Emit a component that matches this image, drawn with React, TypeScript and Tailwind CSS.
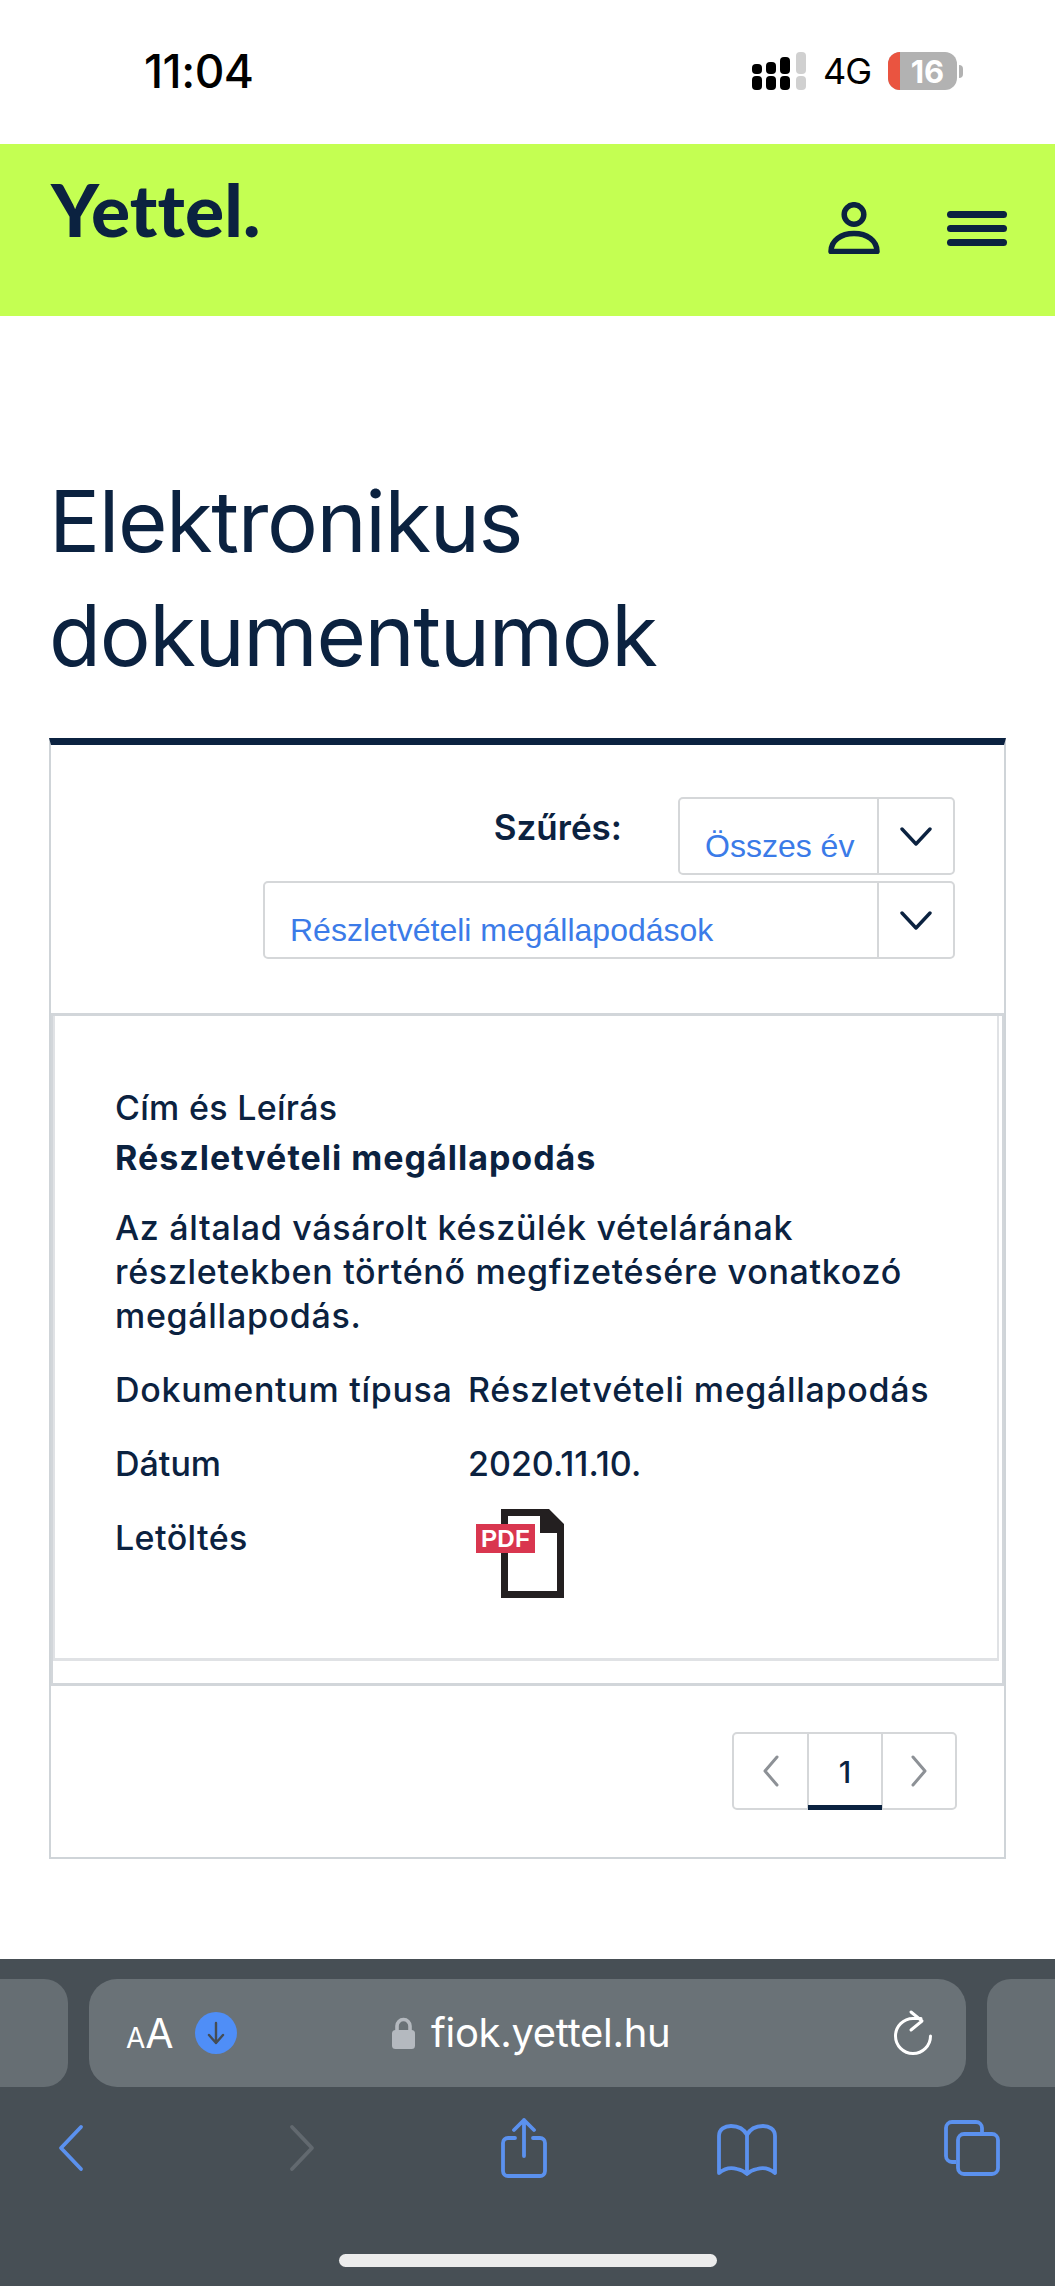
const navy = "#0b2240";

function Select({ label, width }: { label: string; width: string }) {
  return (
    <div className={`flex h-[78px] ${width} rounded-[5px] border-2 border-[#d5d7d9] bg-white`}>
      <div className="flex flex-1 items-end pb-[7px] pl-[25px] font-['Liberation_Sans',sans-serif] text-[32px] leading-[40px] text-[#3b7be8]">
        {label}
      </div>
      <div className="flex w-[76px] items-center justify-center border-l-2 border-[#d5d7d9] pt-[2px]">
        <svg width="32" height="20" viewBox="0 0 32 20" fill="none" stroke={navy} strokeWidth="3.4" strokeLinecap="round" strokeLinejoin="round">
          <path d="M2 2l14 15L30 2" />
        </svg>
      </div>
    </div>
  );
}

function Row({ label, children, className }: { label: string; children: React.ReactNode; className: string }) {
  return (
    <div className={`flex ${className}`}>
      <div className="w-[353px] shrink-0">{label}</div>
      <div>{children}</div>
    </div>
  );
}

function StatusBar() {
  return (
    <div className="flex h-[144px] shrink-0 items-start justify-between bg-white pl-[144px] pr-[92px] pt-[44px]">
      <div className="font-['Inter',sans-serif] text-[46px] font-medium leading-[54px] tracking-[-0.5px] text-black">11:04</div>
      <div className="flex items-center gap-[17px] pt-[8px]">
        <svg width="54" height="38" viewBox="0 0 54 38" fill="#000">
          <rect x="0" y="24" width="10" height="14" rx="4" />
          <rect x="0" y="12" width="10" height="10" rx="4" />
          <rect x="14" y="24" width="10" height="14" rx="4" />
          <rect x="14" y="10" width="10" height="12" rx="4" />
          <rect x="28" y="24" width="10" height="14" rx="4" />
          <rect x="28" y="5" width="10" height="17" rx="4" />
          <rect x="44" y="24" width="10" height="14" rx="4" fill="#d0d0d0" />
          <rect x="44" y="0" width="10" height="22" rx="4" fill="#d0d0d0" />
        </svg>
        <div className="font-['Inter',sans-serif] text-[36px] font-normal leading-[38px] tracking-[-1px] text-black">4G</div>
        <div className="flex items-center gap-[2px]">
          <div className="relative flex h-[38px] w-[69px] items-center justify-center overflow-hidden rounded-[12px] bg-[#b2b2b2] pl-[10px] font-['Inter',sans-serif] text-[31px] font-bold leading-none text-white">
            <div className="absolute inset-y-0 left-0 w-[12px] bg-[#ea5440]" />
            16
          </div>
          <div className="h-[13px] w-[4px] rounded-r-full bg-[#b2b2b2]" />
        </div>
      </div>
    </div>
  );
}

function Header() {
  return (
    <header className="flex h-[172px] shrink-0 items-start justify-between bg-[#c4ff52] pl-[51px] pr-[48px]">
      <div className="pt-[21px] font-['Lato',sans-serif] text-[73px] font-black leading-[88px] tracking-[0.2px] text-[#0b2240]">Yettel.</div>
      <div className="flex items-start gap-[67px] pt-[58px]">
        <svg width="52" height="52" viewBox="0 0 52 52" fill="none" stroke={navy} strokeWidth="5.500">
          <circle cx="26" cy="12.500" r="9.800" />
          <path d="M3 49.500c0-11 10-18 23-18s23 7 23 18z" strokeLinejoin="round" />
        </svg>
        <div className="mt-[9px] flex w-[60px] flex-col gap-[7px]">
          <div className="h-[7px] rounded-full bg-[#0b2240]" />
          <div className="h-[7px] rounded-full bg-[#0b2240]" />
          <div className="h-[7px] rounded-full bg-[#0b2240]" />
        </div>
      </div>
    </header>
  );
}

function Pagination() {
  return (
    <div className="flex h-[78px] w-[225px] rounded-[5px] border-2 border-[#d5d7d9] bg-white">
      <div className="flex w-[73px] items-center justify-center">
        <svg width="18" height="32" viewBox="0 0 18 32" fill="none" stroke="#8d9196" strokeWidth="3" strokeLinecap="round" strokeLinejoin="round">
          <path d="M15 2L3 16l12 14" />
        </svg>
      </div>
      <div className="relative flex w-[76px] items-center justify-center border-x-2 border-[#d5d7d9] pt-[3px] text-[30px] font-medium text-[#0b2240]">
        1
        <div className="absolute inset-x-[-1px] bottom-[-2px] h-[5px] bg-[#0b2240]" />
      </div>
      <div className="flex flex-1 items-center justify-center">
        <svg width="18" height="32" viewBox="0 0 18 32" fill="none" stroke="#8d9196" strokeWidth="3" strokeLinecap="round" strokeLinejoin="round">
          <path d="M3 2l12 14L3 30" />
        </svg>
      </div>
    </div>
  );
}

function PdfIcon() {
  return (
    <div className="relative -mt-[7px] ml-[8px] h-[90px] w-[90px]">
      <svg className="absolute left-[25px] top-0" width="63" height="89" viewBox="0 0 63 89">
        <path fillRule="evenodd" fill="#231f20" d="M0 0h48l15 15v74H0zM7 7v75h49V24H39V7z" />
      </svg>
      <div className="absolute left-0 top-[15px] flex h-[29px] w-[59px] items-center justify-center bg-[#d9364f] font-['Liberation_Sans',sans-serif] text-[24px] font-bold leading-none text-white">
        PDF
      </div>
    </div>
  );
}

function SafariBar() {
  return (
    <div className="flex h-[327px] shrink-0 flex-col bg-[#474f55] pt-[20px]">
      <div className="flex h-[108px] gap-[21px]">
        <div className="w-[68px] rounded-r-[24px] bg-[#666e73]" />
        <div className="relative flex w-[877px] items-center justify-between rounded-[28px] bg-[#6a7277] pl-[37px] pr-[33px]">
          <div className="flex items-center gap-[21px]">
            <div className="flex items-baseline font-['Inter',sans-serif] font-normal leading-none text-white">
              <span className="text-[28px]">A</span>
              <span className="text-[41px]">A</span>
            </div>
            <div className="flex h-[42px] w-[42px] items-center justify-center rounded-full bg-[#4f8ef7]">
              <svg width="20" height="26" viewBox="0 0 20 26" fill="none" stroke="#454d55" strokeWidth="2.4" strokeLinecap="round" strokeLinejoin="round">
                <path d="M10 3v20M3 15l7 8 7-8" />
              </svg>
            </div>
          </div>
          <div className="absolute left-[303px] top-0 flex h-full items-center gap-[16px]">
            <svg width="23" height="32" viewBox="0 0 23 32">
              <path d="M5 14V9a6.500 6.500 0 0 1 13 0v5" fill="none" stroke="#b4b9bf" strokeWidth="3.600" />
              <rect x="0" y="13" width="23" height="19" rx="3.500" fill="#b4b9bf" />
            </svg>
            <span className="font-['Inter',sans-serif] text-[40px] font-normal leading-none tracking-[-0.3px] text-white">fiok.yettel.hu</span>
          </div>
          <svg width="40" height="48" viewBox="0 0 40 48" fill="none" stroke="#fff" strokeWidth="3" strokeLinecap="round" strokeLinejoin="round">
            <path d="M28 9.500H20A17.500 17.500 0 1 0 37.500 27" />
            <path d="M18 3l11 9-11 9" />
          </svg>
        </div>
        <div className="flex-1 rounded-l-[24px] bg-[#666e73]" />
      </div>
      <div className="flex items-start pl-[58px] pt-[31px]">
        <svg width="26" height="58" viewBox="0 0 26 58" fill="none" stroke="#5b91ee" strokeWidth="3.800" strokeLinecap="round" strokeLinejoin="round">
          <path d="M23 9L3 30l20 21" />
        </svg>
        <svg width="26" height="58" viewBox="0 0 26 58" fill="none" stroke="#62696f" strokeWidth="3.800" strokeLinecap="round" strokeLinejoin="round" className="ml-[205px]">
          <path d="M3 9l20 21L3 51" />
        </svg>
        <svg width="46" height="60" viewBox="0 0 46 60" fill="none" stroke="#5b91ee" strokeWidth="3.800" strokeLinecap="round" strokeLinejoin="round" className="ml-[186px]">
          <path d="M14 20H7a5 5 0 0 0-5 5v28a5 5 0 0 0 5 5h32a5 5 0 0 0 5-5V25a5 5 0 0 0-5-5h-7" />
          <path d="M23 38V2M13 12L23 2l10 10" />
        </svg>
        <svg width="60" height="52" viewBox="0 0 60 52" fill="none" stroke="#5b91ee" strokeWidth="3.800" strokeLinejoin="round" className="ml-[170px] mt-[6px]">
          <path d="M30 11C27 5 21 2 14 2 8 2 2 5 2 12v37c6-5 12-6 18-4 5 1 8 3 10 5 2-2 5-4 10-5 6-2 12-1 18 4V12c0-7-6-10-12-10-7 0-13 3-16 9z" />
          <path d="M30 11v39" />
        </svg>
        <svg width="56" height="56" viewBox="0 0 56 56" fill="none" stroke="#5b91ee" strokeWidth="3.800" strokeLinejoin="round" className="ml-[167px] mt-[2px]">
          <path d="M12 42H8a6 6 0 0 1-6-6V8a6 6 0 0 1 6-6h24a6 6 0 0 1 6 6v4" />
          <rect x="14" y="14" width="40" height="40" rx="6" />
        </svg>
      </div>
      <div className="mx-auto mt-[76px] h-[13px] w-[378px] rounded-full bg-[#ececec]" />
    </div>
  );
}

export default function App() {
  return (
    <div className="flex h-[2286px] w-[1055px] flex-col overflow-hidden bg-white font-['Inter',sans-serif] text-[#0b2240]">
      <StatusBar />
      <Header />
      <main className="flex-1 px-[49px] pt-[149px]">
        <h1 className="text-[85px] font-normal leading-[114px] tracking-[-1.4px]">
          Elektronikus
          <br />
          dokumentumok
        </h1>
        <div className="mt-[45px] h-[1121px] border-x-2 border-b-2 border-t-[7px] border-[#cfd4d8] border-t-[#0b2240]">
          <div className="flex h-[268px] flex-col items-end gap-[6px] pr-[49px] pt-[52px]">
            <div className="flex items-start">
              <div className="pr-[56px] pt-[7px] text-[35px] font-semibold leading-[46px]">Szűrés:</div>
              <Select label="Összes év" width="w-[277px]" />
            </div>
            <Select label="Részletvételi megállapodások" width="w-[692px]" />
          </div>
          <div className="border-2 border-y-[3px] border-[#d2d6da] pb-[22px] pr-[3px]">
            <div className="h-[645px] border-x-[2px] border-b-[3px] border-[#e0e2e5] pl-[60px] pt-[70px] text-[34px] font-medium leading-[44px]">
              <div className="tracking-[0.3px]">Cím és Leírás</div>
              <div className="mt-[6px] font-bold tracking-[1px]">Részletvételi megállapodás</div>
              <p className="mt-[26px] w-[820px] tracking-[0.7px]">
                Az általad vásárolt készülék vételárának részletekben történő megfizetésére vonatkozó megállapodás.
              </p>
              <Row label="Dokumentum típusa" className="mt-[30px] tracking-[0.7px]">Részletvételi megállapodás</Row>
              <Row label="Dátum" className="mt-[30px]">2020.11.10.</Row>
              <Row label="Letöltés" className="mt-[30px] tracking-[0.4px]"><PdfIcon /></Row>
            </div>
          </div>
          <div className="flex justify-end pr-[47px] pt-[46px]">
            <Pagination />
          </div>
        </div>
      </main>
      <SafariBar />
    </div>
  );
}
